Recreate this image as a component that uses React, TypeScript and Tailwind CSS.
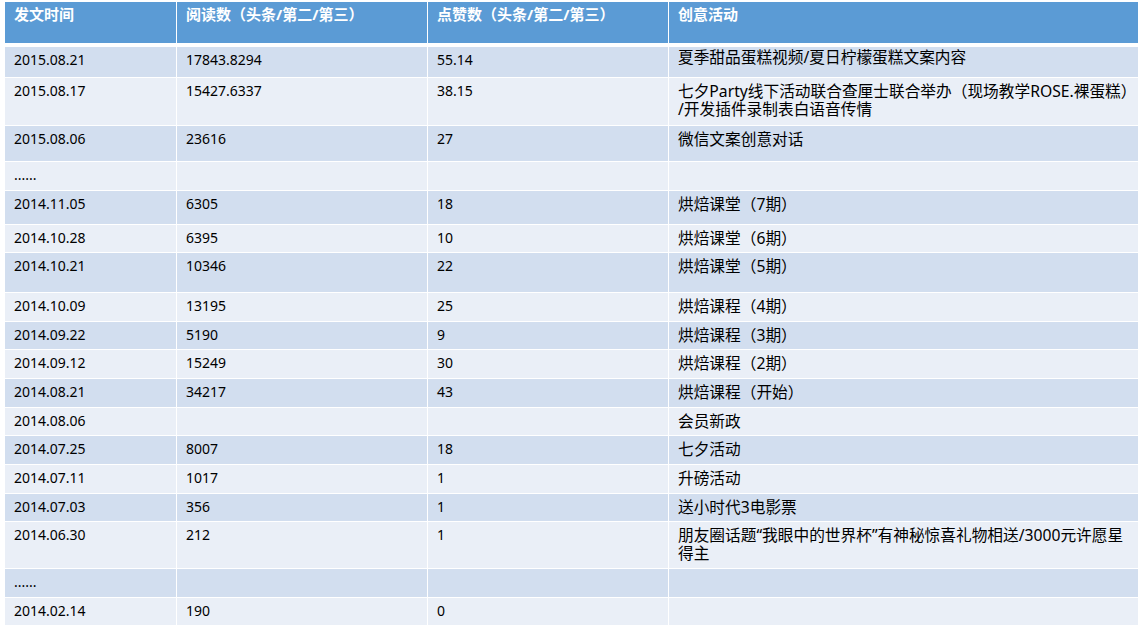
const rows = [
  { d: '2015.08.21', r: '17843.8294', l: '55.14', a: ['夏季甜品蛋糕视频/夏日柠檬蛋糕文案内容'], h: 'h-[30px]', first: true },
  { d: '2015.08.17', r: '15427.6337', l: '38.15', a: ['七夕Party线下活动联合查厘士联合举办（现场教学ROSE.裸蛋糕）', '/开发插件录制表白语音传情'], h: 'h-[47px]' },
  { d: '2015.08.06', r: '23616', l: '27', a: ['微信文案创意对话'], h: 'h-[35px]' },
  { d: '......', r: '', l: '', a: [], h: 'h-[28px]' },
  { d: '2014.11.05', r: '6305', l: '18', a: ['烘焙课堂（7期）'], h: 'h-[33px]' },
  { d: '2014.10.28', r: '6395', l: '10', a: ['烘焙课堂（6期）'], h: 'h-[27px]' },
  { d: '2014.10.21', r: '10346', l: '22', a: ['烘焙课堂（5期）'], h: 'h-[39px]' },
  { d: '2014.10.09', r: '13195', l: '25', a: ['烘焙课程（4期）'], h: 'h-[28px]' },
  { d: '2014.09.22', r: '5190', l: '9', a: ['烘焙课程（3期）'], h: 'h-[27px]' },
  { d: '2014.09.12', r: '15249', l: '30', a: ['烘焙课程（2期）'], h: 'h-[28px]' },
  { d: '2014.08.21', r: '34217', l: '43', a: ['烘焙课程（开始）'], h: 'h-[28px]' },
  { d: '2014.08.06', r: '', l: '', a: ['会员新政'], h: 'h-[27px]' },
  { d: '2014.07.25', r: '8007', l: '18', a: ['七夕活动'], h: 'h-[28px]' },
  { d: '2014.07.11', r: '1017', l: '1', a: ['升磅活动'], h: 'h-[28px]' },
  { d: '2014.07.03', r: '356', l: '1', a: ['送小时代3电影票'], h: 'h-[27px]' },
  { d: '2014.06.30', r: '212', l: '1', a: ['朋友圈话题“我眼中的世界杯”有神秘惊喜礼物相送/3000元许愿星', '得主'], h: 'h-[46px]' },
  { d: '......', r: '', l: '', a: [], h: 'h-[28px]' },
  { d: '2014.02.14', r: '190', l: '0', a: [], h: 'h-[28px]' },
];

const num = "pl-[9px] pt-[4px] text-[14px] leading-[17px] text-black [font-family:'Noto_Sans','Noto_Sans_CJK_SC',sans-serif]";
const txt = "pl-[9px] text-[15.7px] leading-[18px] text-black whitespace-nowrap [font-family:'Noto_Sans','Noto_Sans_CJK_SC',sans-serif]";
const head = "pl-[9px] pt-[3px] text-[15px] leading-[18px] font-bold text-white whitespace-nowrap bg-[#5b9bd5] [font-family:'Noto_Sans','Noto_Sans_CJK_SC',sans-serif]";

export default function App() {
  return (
    <div className="h-[625px] w-[1141px] overflow-hidden bg-white pl-[5px] pt-[2px]">
      <div className="w-[1133px]">
        <div className="mb-[4px] grid h-[41px] grid-cols-[171px_250px_240px_469px] gap-x-px">
          <div className={head}>发文时间</div>
          <div className={head}>阅读数（头条/第二/第三）</div>
          <div className={head}>点赞数（头条/第二/第三）</div>
          <div className={head}>创意活动</div>
        </div>
        {rows.map((row, i) => {
          const bg = i % 2 === 0 ? 'bg-[#d2deef]' : 'bg-[#eaeff7]';
          return (
            <div key={i} className={`grid grid-cols-[171px_250px_240px_469px] gap-x-px ${i > 0 ? 'mt-px' : ''} ${row.h}`}>
              <div className={`${num} ${bg}`}>{row.d}</div>
              <div className={`${num} ${bg}`}>{row.r}</div>
              <div className={`${num} ${bg}`}>{row.l}</div>
              <div className={`${txt} ${bg} ${row.first ? 'pt-px' : 'pt-[4px]'}`}>
                {row.a.map((line, j) => (
                  <div key={j}>{line}</div>
                ))}
              </div>
            </div>
          );
        })}
      </div>
    </div>
  );
}
